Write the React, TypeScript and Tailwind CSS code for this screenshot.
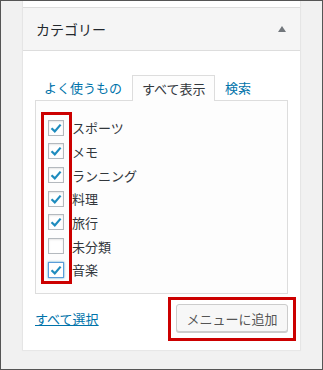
const items = [
  { label: 'スポーツ', checked: true },
  { label: 'メモ', checked: true },
  { label: 'ランニング', checked: true },
  { label: '料理', checked: true },
  { label: '旅行', checked: true },
  { label: '未分類', checked: false },
  { label: '音楽', checked: true, focus: true },
]

const Check = ({ checked, focus }: { checked: boolean; focus?: boolean }) => (
  <span
    className={
      focus
        ? 'w-4 h-4 shrink-0 bg-white border border-[#5b9dd9] shadow-[0_0_2px_rgba(30,140,190,0.8)] flex items-center justify-center'
        : 'w-4 h-4 shrink-0 bg-white border border-[#b4b9be] shadow-[inset_0_1px_2px_rgba(0,0,0,0.1)] flex items-center justify-center'
    }
  >
    {checked && (
      <svg width="14" height="14" viewBox="0 0 14 14">
        <path d="M2.5 7.2 L5.8 10.4 L11.6 3.6" fill="none" stroke="#1e8cbe" strokeWidth="2.2" />
      </svg>
    )}
  </span>
)

const App = () => {
  return (
    <div className="w-[323px] h-[370px] border border-[#555] bg-[#f1f1f1] font-['Noto_Sans_CJK_JP',sans-serif] overflow-hidden">
      <div className="ml-[21px] w-[279px] bg-white border-x border-[#e5e5e5] shadow-[0_1px_1px_rgba(0,0,0,0.04)]">
        <div className="h-[7px] border-b border-[#ddd]" />
        <div className="h-[43px] border-b border-[#ddd] bg-[#f5f5f5] flex items-center justify-between pl-[13px] pr-[14px]">
          <h3 className="text-[14px] text-[#23282d] leading-none">カテゴリー</h3>
          <svg width="8" height="6" viewBox="0 0 8 6">
            <path d="M0 6 L4 0 L8 6 Z" fill="#72777c" />
          </svg>
        </div>

        <div className="px-[12px] pt-[24px] pb-[18px]">
          <div className="flex items-end h-[25px] text-[13px]">
            <span className="pl-[9px] w-[97px] leading-[25px] text-[#0073aa]">よく使うもの</span>
            <span className="relative z-10 -mb-px w-[83px] h-[26px] pl-[9px] leading-[25px] border border-b-0 border-[#ddd] bg-[#fdfdfd] text-[#32373c]">
              すべて表示
            </span>
            <span className="pl-[10px] leading-[25px] text-[#0073aa]">検索</span>
          </div>

          <div className="relative h-[194px] border border-[#ddd] bg-[#fdfdfd] pt-[15px] pl-[12px]">
            {items.map((item) => (
              <div key={item.label} className="h-[23.67px] flex items-center gap-[8px]">
                <Check checked={item.checked} focus={item.focus} />
                <span className="text-[13px] text-[#32373c] leading-none">{item.label}</span>
              </div>
            ))}
            <div className="absolute left-[5px] top-[11px] w-[31px] h-[172px] border-[3px] border-[#c00]" />
          </div>

          <div className="mt-[10px] flex items-center justify-between">
            <a className="text-[13px] text-[#0073aa] underline leading-none">すべて選択</a>
            <div className="relative">
              <button className="w-[112px] h-[28px] border border-[#ccc] bg-[#f7f7f7] rounded-[3px] shadow-[0_1px_0_#ccc] text-[13px] text-[#555] leading-none">
                メニューに追加
              </button>
              <div className="absolute -left-[8px] -right-[8px] -top-[7px] -bottom-[9px] border-[3px] border-[#c00]" />
            </div>
          </div>
        </div>
      </div>
    </div>
  )
}

export default App
